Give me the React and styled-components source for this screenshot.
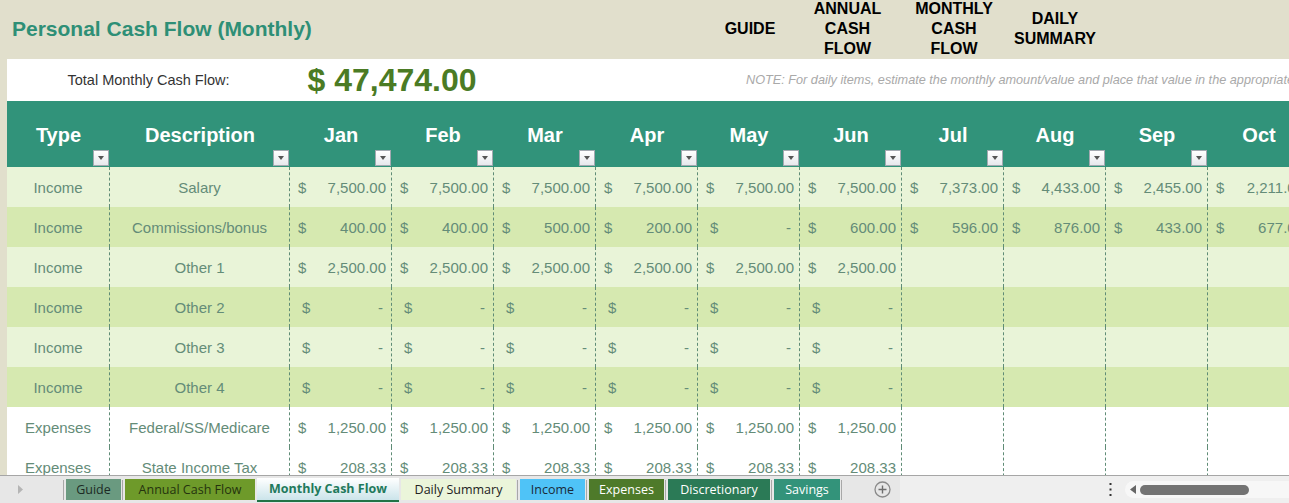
import React from 'react';
import styled, { createGlobalStyle } from 'styled-components';

const GlobalStyle = createGlobalStyle`
  html, body { margin: 0; padding: 0; overflow: hidden; }
`;

const BEIGE = '#e1dfcc';
const GREEN = '#31937a';
const CELL_TEXT = '#648c78';

const Page = styled.div`
  width: 1289px;
  height: 503px;
  display: flex;
  flex-direction: column;
  overflow: hidden;
  background: ${BEIGE};
  font-family: "Liberation Sans", Arial, sans-serif;
`;

const TopBar = styled.header`
  height: 59px;
  flex-shrink: 0;
  display: flex;
  align-items: center;
`;

const Title = styled.h1`
  margin: 0;
  width: 700px;
  padding: 0 0 2px 12px;
  box-sizing: border-box;
  font-size: 21px;
  font-weight: bold;
  color: #2e8f76;
`;

const NavItem = styled.div`
  width: ${p => p.$w}px;
  text-align: center;
  font-size: 16px;
  font-weight: bold;
  line-height: 20px;
  color: #000;
  margin-top: -2px;
`;

const Sheet = styled.main`
  flex: 1;
  min-height: 0;
  display: flex;
  padding-left: 7px;
  overflow: hidden;
`;

const SheetBody = styled.div`
  flex: 1;
  min-width: 0;
  background: #fff;
  overflow: hidden;
`;

const TotalRow = styled.div`
  height: 42px;
  display: grid;
  grid-template-columns: 283px 204px 1fr;
  align-items: center;
`;

const TotalLabel = styled.div`
  text-align: center;
  font-size: 14.5px;
  color: #333;
`;

const TotalValue = styled.div`
  text-align: center;
  font-size: 32px;
  font-weight: bold;
  color: #4b7b24;
`;

const Note = styled.div`
  padding-left: 252px;
  white-space: nowrap;
  font-size: 12.7px;
  font-style: italic;
  color: #a9a9a9;
`;

const Table = styled.div`
  display: grid;
  width: 1303px;
  grid-template-columns: 103px 180px repeat(10, 102px);
  grid-template-rows: 66px;
  grid-auto-rows: 40px;
`;

const HeadCell = styled.div`
  position: relative;
  background: ${GREEN};
  color: #fff;
  font-size: 20px;
  font-weight: bold;
  line-height: 23px;
  text-align: center;
  padding-top: 23px;
  box-sizing: border-box;
`;

const FilterButton = styled.span`
  position: absolute;
  right: 1px;
  bottom: 1px;
  width: 16px;
  height: 16px;
  box-sizing: border-box;
  border: 1px solid #a3a9b1;
  background: linear-gradient(#ffffff, #e6e8ec);
  &::after {
    content: '';
    position: absolute;
    left: 4px;
    top: 5px;
    border-left: 3.5px solid transparent;
    border-right: 3.5px solid transparent;
    border-top: 4px solid #555;
  }
`;

const bands = {
  light: '#e9f4d8',
  dark: '#d6e9b0',
  white: '#ffffff',
};

const Cell = styled.div`
  background: ${p => bands[p.$band]};
  border-right: 1px dashed #5f8c76;
  box-sizing: border-box;
  font-size: 15px;
  color: ${CELL_TEXT};
  display: flex;
  align-items: center;
`;

const TextCell = styled(Cell)`
  justify-content: center;
`;

const AmountCell = styled(Cell)`
  justify-content: space-between;
  padding: 0 ${p => (p.$dash ? 8 : 5)}px 0 ${p => (p.$dash ? 12 : 8)}px;
`;

const TabBar = styled.footer`
  height: 28px;
  flex-shrink: 0;
  display: flex;
  border-top: 1px solid #a6a6a6;
  box-sizing: border-box;
  font-family: "Open Sans", "Noto Sans", sans-serif;
`;

const TabStrip = styled.div`
  width: 900px;
  display: flex;
  align-items: center;
  background: #e7e7e7;
`;

const ScrollArrows = styled.div`
  width: 62px;
  height: 100%;
  display: flex;
  align-items: center;
  padding-left: 18px;
  box-sizing: border-box;
`;

const Sep = styled.span`
  width: 1px;
  height: 20px;
  margin: 0 2px 0 1px;
  background: #a8a8a8;
`;

const Spacer = styled.span`
  width: 2px;
`;

const Tab = styled.div`
  width: ${p => p.$w}px;
  height: ${p => (p.$active ? 24 : 21)}px;
  box-sizing: border-box;
  display: flex;
  align-items: center;
  justify-content: center;
  font-size: 12.5px;
  white-space: nowrap;
  background: ${p => (p.$active ? 'linear-gradient(#ffffff, #cbe4ea)' : p.$bg)};
  color: ${p => (p.$active ? '#1f7a5c' : p.$fg)};
  font-weight: ${p => (p.$active ? 'bold' : 'normal')};
  border-bottom: ${p => (p.$active ? '2px solid #217346' : 'none')};
`;

const AddButton = styled.span`
  margin-left: 30px;
  display: flex;
`;

const RightArea = styled.div`
  flex: 1;
  display: flex;
  align-items: center;
  background: #efefef;
  padding-left: 209px;
`;

const MoreDots = styled.span`
  display: flex;
  width: 16px;
`;

const ScrollTrack = styled.div`
  flex: 1;
  height: 17px;
  display: flex;
  align-items: center;
  background: #f7f7f7;
  border-radius: 9px 0 0 9px;
  padding-left: 5px;
`;

const Thumb = styled.span`
  width: 109px;
  height: 10px;
  margin-left: 4px;
  border-radius: 5px;
  background: #737373;
`;

const months = ['Jan', 'Feb', 'Mar', 'Apr', 'May', 'Jun', 'Jul', 'Aug', 'Sep', 'Oct'];

const six = v => Array(6).fill(v);

const rows = [
  { type: 'Income', desc: 'Salary', band: 'light', values: [...six('7,500.00'), '7,373.00', '4,433.00', '2,455.00', '2,211.00'] },
  { type: 'Income', desc: 'Commissions/bonus', band: 'dark', values: ['400.00', '400.00', '500.00', '200.00', '-', '600.00', '596.00', '876.00', '433.00', '677.00'] },
  { type: 'Income', desc: 'Other 1', band: 'light', values: six('2,500.00') },
  { type: 'Income', desc: 'Other 2', band: 'dark', values: six('-') },
  { type: 'Income', desc: 'Other 3', band: 'light', values: six('-') },
  { type: 'Income', desc: 'Other 4', band: 'dark', values: six('-') },
  { type: 'Expenses', desc: 'Federal/SS/Medicare', band: 'white', values: six('1,250.00') },
  { type: 'Expenses', desc: 'State Income Tax', band: 'white', values: six('208.33') },
];

const tabs = [
  { label: 'Guide', bg: '#6a9a80', fg: '#1c2a24', w: 55, sep: true },
  { label: 'Annual Cash Flow', bg: '#6e9a2a', fg: '#25330e', w: 130 },
  { label: 'Monthly Cash Flow', active: true, w: 142 },
  { label: 'Daily Summary', bg: '#ebf5da', fg: '#222', w: 115, sep: true },
  { label: 'Income', bg: '#4fc3f7', fg: '#1a2a3a', w: 65, sep: true },
  { label: 'Expenses', bg: '#4e7a2a', fg: '#fff', w: 75, sep: true },
  { label: 'Discretionary', bg: '#2b7a56', fg: '#fff', w: 102, sep: true },
  { label: 'Savings', bg: '#33937a', fg: '#fff', w: 66, sep: true },
];

function Amount({ value, band }) {
  if (value == null) return <Cell $band={band} />;
  const dash = value === '-';
  return (
    <AmountCell $band={band} $dash={dash}>
      <span>$</span>
      <span>{value}</span>
    </AmountCell>
  );
}

export default function App() {
  return (
    <Page>
      <GlobalStyle />
      <TopBar>
        <Title>Personal Cash Flow (Monthly)</Title>
        <NavItem $w={100}>GUIDE</NavItem>
        <NavItem $w={95}>ANNUAL<br />CASH<br />FLOW</NavItem>
        <NavItem $w={118}>MONTHLY<br />CASH<br />FLOW</NavItem>
        <NavItem $w={84}>DAILY<br />SUMMARY</NavItem>
      </TopBar>

      <Sheet>
        <SheetBody>
          <TotalRow>
            <TotalLabel>Total Monthly Cash Flow:</TotalLabel>
            <TotalValue>$ 47,474.00</TotalValue>
            <Note>NOTE: For daily items, estimate the monthly amount/value and place that value in the appropriate month column.</Note>
          </TotalRow>

          <Table>
            <HeadCell>Type<FilterButton /></HeadCell>
            <HeadCell>Description<FilterButton /></HeadCell>
            {months.map(m => (
              <HeadCell key={m}>{m}<FilterButton /></HeadCell>
            ))}

            {rows.map((r, i) => (
              <React.Fragment key={i}>
                <TextCell $band={r.band}>{r.type}</TextCell>
                <TextCell $band={r.band}>{r.desc}</TextCell>
                {months.map((m, j) => (
                  <Amount key={m} value={r.values[j]} band={r.band} />
                ))}
              </React.Fragment>
            ))}
          </Table>
        </SheetBody>
      </Sheet>

      <TabBar>
        <TabStrip>
          <ScrollArrows>
            <svg width="5" height="9" viewBox="0 0 5 9">
              <path d="M0 0 L5 4.5 L0 9 Z" fill="#b5b5b5" />
            </svg>
          </ScrollArrows>
          <Sep />
          {tabs.map(t => (
            <React.Fragment key={t.label}>
              <Tab $w={t.w} $bg={t.bg} $fg={t.fg} $active={t.active}>{t.label}</Tab>
              {t.sep ? <Sep /> : <Spacer />}
            </React.Fragment>
          ))}
          <AddButton>
            <svg width="17" height="17" viewBox="0 0 17 17">
              <circle cx="8.5" cy="8.5" r="7.5" fill="none" stroke="#8a8a8a" strokeWidth="1.3" />
              <path d="M8.5 4.5 V12.5 M4.5 8.5 H12.5" stroke="#6e6e6e" strokeWidth="1.4" />
            </svg>
          </AddButton>
        </TabStrip>
        <RightArea>
          <MoreDots>
            <svg width="3" height="13" viewBox="0 0 3 13">
              <rect x="0.5" y="0" width="2" height="2" fill="#333" />
              <rect x="0.5" y="5.5" width="2" height="2" fill="#333" />
              <rect x="0.5" y="11" width="2" height="2" fill="#333" />
            </svg>
          </MoreDots>
          <ScrollTrack>
            <svg width="6" height="9" viewBox="0 0 6 9">
              <path d="M6 0 L0 4.5 L6 9 Z" fill="#666" />
            </svg>
            <Thumb />
          </ScrollTrack>
        </RightArea>
      </TabBar>
    </Page>
  );
}
